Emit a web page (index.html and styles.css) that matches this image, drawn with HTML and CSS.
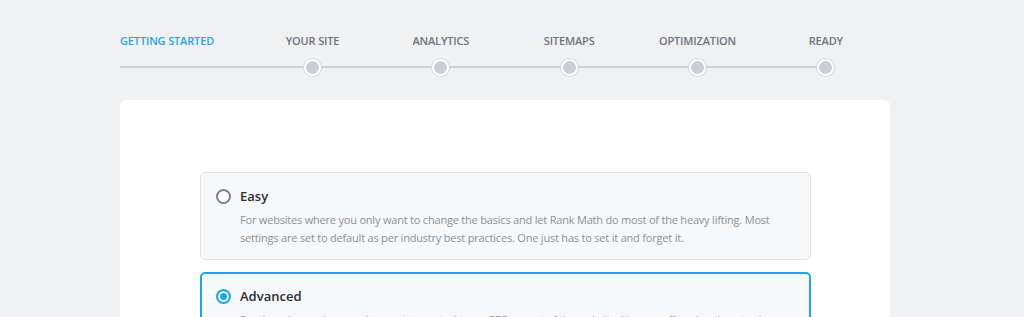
FILE: index.html
```html
<!DOCTYPE html>
<html lang="en">
<head>
  <meta charset="UTF-8" />
  <title>Setup Wizard</title>
  <link rel="stylesheet" href="styles.css">
</head>
<body>

  <!-- Pasos del asistente -->
  <div class="wizard">
    <ol class="steps">
      <li class="step active first">
        <span class="step-label">Getting Started</span>
        <span class="step-track"><i class="seg"></i></span>
      </li>
      <li class="step">
        <span class="step-label">Your Site</span>
        <span class="step-track"><i class="seg"></i><b class="dot"></b><i class="seg"></i></span>
      </li>
      <li class="step">
        <span class="step-label">Analytics</span>
        <span class="step-track"><i class="seg"></i><b class="dot"></b><i class="seg"></i></span>
      </li>
      <li class="step">
        <span class="step-label">Sitemaps</span>
        <span class="step-track"><i class="seg"></i><b class="dot"></b><i class="seg"></i></span>
      </li>
      <li class="step">
        <span class="step-label">Optimization</span>
        <span class="step-track"><i class="seg"></i><b class="dot"></b><i class="seg"></i></span>
      </li>
      <li class="step last">
        <span class="step-label">Ready</span>
        <span class="step-track"><i class="seg"></i><b class="dot"></b><i class="seg none"></i></span>
      </li>
    </ol>

    <!-- Tarjeta principal -->
    <div class="card">
      <label class="mode">
        <span class="radio"></span>
        <span class="mode-body">
          <span class="mode-title">Easy</span>
          <span class="mode-desc">For websites where you only want to change the basics and let Rank Math do most of the heavy lifting. Most settings are set to default as per industry best practices. One just has to set it and forget it.</span>
        </span>
      </label>

      <label class="mode selected">
        <span class="radio"></span>
        <span class="mode-body">
          <span class="mode-title">Advanced</span>
          <span class="mode-desc">For the advanced users who want to control every SEO aspect of the website. You are offered options to change everything and have full control over the website's SEO.</span>
        </span>
      </label>
    </div>
  </div>

</body>
</html>
```

FILE: styles.css
```css
/* ================================
   Variables
================================= */
:root {
  --bg: #f0f1f3;
  --blue: #2ba2e3;
  --border-blue: #1fa6e6;
  --track: #cdd1d8;
  --label: #6f737a;
  --title: #2a2e33;
  --muted: #8b9097;
}

* {
  margin: 0;
  padding: 0;
  box-sizing: border-box;
}

body {
  background: var(--bg);
  font-family: 'Open Sans', 'Noto Sans', sans-serif;
  color: var(--title);
  overflow: hidden;
}

.wizard {
  width: 770px;
  margin: 0 0 0 120px;
  padding-top: 33px;
}

/* ================================
   Pasos
================================= */
.steps {
  list-style: none;
  display: grid;
  grid-template-columns: repeat(6, 1fr);
}

.step {
  display: flex;
  flex-direction: column;
  align-items: center;
  gap: 10px;
}

.step.first {
  align-items: flex-start;
}

.step-label {
  font-size: 11px;
  font-weight: 600;
  line-height: 16px;
  text-transform: uppercase;
  color: var(--label);
  letter-spacing: -0.15px;
}

.step.active .step-label {
  color: var(--blue);
}

.step-track {
  display: flex;
  align-items: center;
  width: 100%;
  height: 16px;
}

.seg {
  flex: 1;
  height: 2px;
  background: var(--track);
}

.seg.none {
  background: transparent;
}

.dot {
  width: 17px;
  height: 17px;
  border-radius: 50%;
  background: #c9ced6;
  border: 2px solid #fff;
  box-shadow: 0 0 0 1px #d5d9de;
  flex-shrink: 0;
}

/* ================================
   Tarjeta
================================= */
.card {
  margin-top: 25px;
  background: #fff;
  border-radius: 6px;
  box-shadow: 0 1px 2px rgba(0,0,0,0.03);
  padding: 72px 79px 40px 80px;
  display: flex;
  flex-direction: column;
  gap: 12px;
  min-height: 400px;
}

.mode {
  display: flex;
  align-items: flex-start;
  gap: 9px;
  background: #f7f8fa;
  border: 1px solid #e0e3e7;
  border-radius: 5px;
  padding: 14px 20px 12px 15px;
  cursor: pointer;
}

.mode.selected {
  border: 2px solid var(--border-blue);
  padding: 13px 19px 11px 14px;
}

.radio {
  width: 15px;
  height: 15px;
  border-radius: 50%;
  border: 2px solid #7c7f84;
  background: #fff;
  margin-top: 2px;
  flex-shrink: 0;
}

.mode.selected .radio {
  border-color: var(--border-blue);
  background: var(--border-blue);
  box-shadow: inset 0 0 0 2px #fff;
}

.mode-body {
  display: flex;
  flex-direction: column;
  gap: 6px;
}

.mode-title {
  font-size: 13px;
  font-weight: 600;
  line-height: 18px;
  color: var(--title);
}

.mode-desc {
  font-size: 11px;
  line-height: 18px;
  color: var(--muted);
  letter-spacing: -0.2px;
}
```
